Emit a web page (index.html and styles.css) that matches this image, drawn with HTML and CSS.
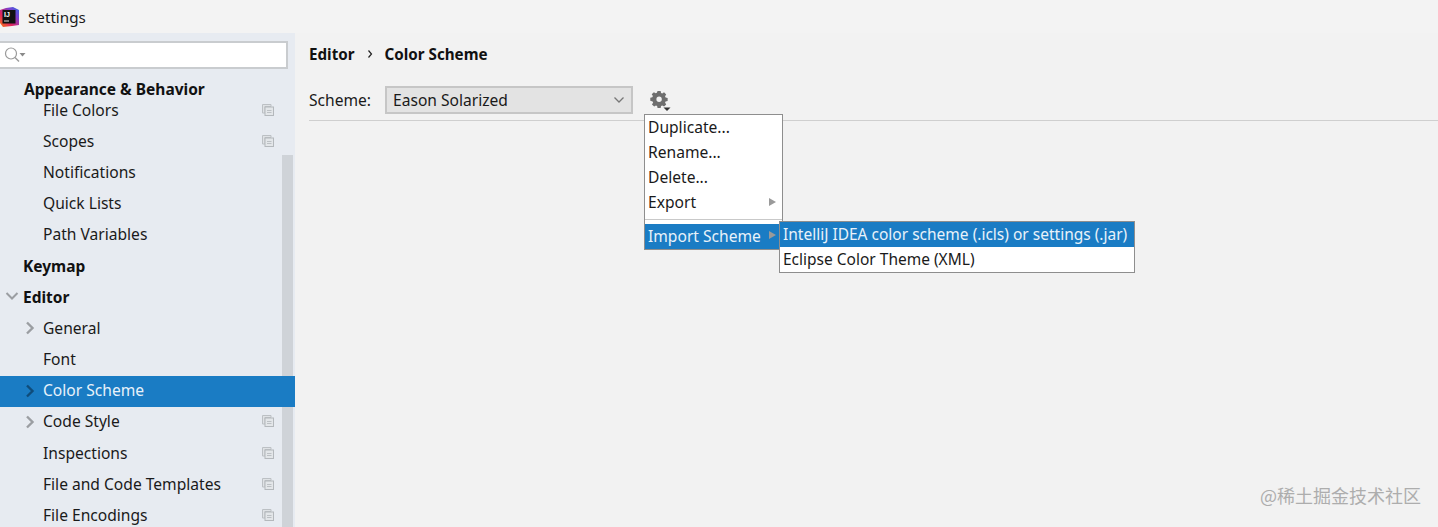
FILE: index.html
```html
<!DOCTYPE html>
<html lang="en">
<head>
<meta charset="utf-8">
<title>Settings</title>
<link rel="stylesheet" href="styles.css">
</head>
<body>
<svg class="defs" width="0" height="0" aria-hidden="true">
  <defs>
    <symbol id="copy" viewBox="0 0 12 12">
      <path d="M0.5 0.5h8.5v2H3v6.5H0.5z" fill="#dfe2e5" stroke="#bcc0c4"/>
      <rect x="3" y="3" width="8.5" height="8.5" fill="#e3e6e9" stroke="#b4b8bc"/>
      <path d="M5 6.5h4.5M5 8.5h4.5" stroke="#bcc0c4"/>
    </symbol>
    <symbol id="chev" viewBox="0 0 10 14">
      <path d="M2 1.5 7.5 7 2 12.5" fill="none" stroke="currentColor" stroke-width="2.4"/>
    </symbol>
  </defs>
</svg>
<div class="window">
  <header class="titlebar">
    <svg class="logo" viewBox="0 0 20 20" width="20" height="20">
      <defs>
        <linearGradient id="lg" x1="0" y1="1" x2="1" y2="0">
          <stop offset="0" stop-color="#f97a12"/>
          <stop offset=".35" stop-color="#e0245e"/>
          <stop offset=".7" stop-color="#7a3fd0"/>
          <stop offset="1" stop-color="#2f6ce0"/>
        </linearGradient>
      </defs>
      <path d="M0 3 6 1 13 0 19 3 19 18 12 19 3 20 0 16z" fill="url(#lg)"/>
      <rect x="2.500" y="3" width="13" height="13.500" fill="#111"/>
      <text x="4" y="10" class="logo-text">IJ</text>
      <rect x="4" y="13.500" width="5" height="1" fill="#ddd"/>
    </svg>
    <span class="title">Settings</span>
  </header>
  <div class="body">
    <aside class="sidebar">
      <div class="search">
        <svg class="search-icon" viewBox="0 0 22 18" width="22" height="18">
          <circle cx="7" cy="7.500" r="5.500" fill="none" stroke="#9a9a9a" stroke-width="1.200"/>
          <path d="M11 11.500 15 15.500" stroke="#9a9a9a" stroke-width="1.500"/>
          <path d="M15.500 7h6l-3 3.500z" fill="#8a8a8a"/>
        </svg>
      </div>
      <div class="tree-wrap">
        <div class="scrollbar"></div>
        <div class="sticky-row bold">Appearance &amp; Behavior</div>
        <ul class="tree">
          <li class="row"><span class="label">File Colors</span><svg class="copy"><use href="#copy"/></svg></li>
          <li class="row"><span class="label">Scopes</span><svg class="copy"><use href="#copy"/></svg></li>
          <li class="row"><span class="label">Notifications</span></li>
          <li class="row"><span class="label">Quick Lists</span></li>
          <li class="row"><span class="label">Path Variables</span></li>
          <li class="row top bold"><span class="label">Keymap</span></li>
          <li class="row top bold">
            <svg class="down" viewBox="0 0 14 10" width="14" height="10"><path d="M1.500 2 7 7.500 12.500 2" fill="none" stroke="#9b9ea2" stroke-width="2"/></svg>
            <span class="label">Editor</span>
          </li>
          <li class="row"><svg class="chev"><use href="#chev"/></svg><span class="label">General</span></li>
          <li class="row"><span class="label">Font</span></li>
          <li class="row selected"><svg class="chev"><use href="#chev"/></svg><span class="label">Color Scheme</span></li>
          <li class="row"><svg class="chev"><use href="#chev"/></svg><span class="label">Code Style</span><svg class="copy"><use href="#copy"/></svg></li>
          <li class="row"><span class="label">Inspections</span><svg class="copy"><use href="#copy"/></svg></li>
          <li class="row"><span class="label">File and Code Templates</span><svg class="copy"><use href="#copy"/></svg></li>
          <li class="row"><span class="label">File Encodings</span><svg class="copy"><use href="#copy"/></svg></li>
        </ul>
      </div>
    </aside>
    <main class="content">
      <nav class="crumbs">
        <span>Editor</span>
        <svg class="crumb-sep" viewBox="0 0 6 10" width="6" height="10"><path d="M1.500 1.500 4.500 5 1.500 8.500" fill="none" stroke="#222" stroke-width="1.200"/></svg>
        <span>Color Scheme</span>
      </nav>
      <div class="scheme">
        <label class="scheme-label">Scheme:</label>
        <div class="combo">
          <span>Eason Solarized</span>
          <svg viewBox="0 0 12 8" width="12" height="8"><path d="M1.500 1.500 6 6l4.500-4.500" fill="none" stroke="#777" stroke-width="1.300"/></svg>
        </div>
        <svg class="gear" viewBox="0 0 22 22" width="22" height="22">
          <path fill-rule="evenodd" fill="#6e6e6e" d="M7.300 1h3.400l.5 2.300 1.300.6 2-1.300 2.400 2.400-1.300 2 .6 1.300 2.300.5v3.400l-2.300.5-.6 1.300 1.300 2-2.400 2.400-2-1.300-1.300.6-.5 2.300H7.300l-.5-2.300-1.300-.6-2 1.300-2.400-2.400 1.300-2-.6-1.300L-.8 12V8.600l2.300-.5.6-1.300-1.300-2 2.400-2.400 2 1.300 1.300-.6zM9 7.300a3 3 0 1 0 0 6 3 3 0 0 0 0-6z" transform="translate(1 0) scale(.9)"/>
          <path d="M13.500 17.500h7l-3.500 3.500z" fill="#333"/>
        </svg>
      </div>
      <ul class="menu">
        <li class="item">Duplicate...</li>
        <li class="item">Rename...</li>
        <li class="item">Delete...</li>
        <li class="item has-sub">Export<i class="arrow"></i></li>
        <li class="sep"></li>
        <li class="item active has-sub">Import Scheme<i class="arrow"></i></li>
      </ul>
      <ul class="submenu">
        <li class="item active">IntelliJ IDEA color scheme (.icls) or settings (.jar)</li>
        <li class="item">Eclipse Color Theme (XML)</li>
      </ul>
      <div class="watermark">@稀土掘金技术社区</div>
    </main>
  </div>
</div>
</body>
</html>
```
FILE: styles.css
```css
* { box-sizing: border-box; }
html, body { margin: 0; height: 100%; overflow: hidden; }
body {
  font-family: "Noto Sans", "Noto Sans CJK SC", sans-serif;
  font-size: 15.6px;
  color: #1a1a1a;
  background: #f2f2f2;
}
ul { list-style: none; margin: 0; padding: 0; }
.defs { position: absolute; }
.window { width: 1438px; height: 527px; display: flex; flex-direction: column; }

.titlebar { height: 33px; display: flex; align-items: center; padding-top: 1px; background: #f3f3f3; flex: none; }
.logo { margin-right: 8px; flex: none; }
.logo-text { font: 700 7px "Liberation Sans", sans-serif; fill: #fff; }
.title { font-size: 15.2px; }

.body { flex: 1; display: flex; min-height: 0; }
.sidebar { width: 295px; flex: none; background: #e7ebf1; display: flex; flex-direction: column; overflow: hidden; padding-top: 8px; }
.search { width: 288px; height: 28px; flex: none; background: #fff; border: 2px solid #c9cccf; border-left: 0; display: flex; align-items: center; padding-left: 4px; }
.search-icon { flex: none; }

.tree-wrap { flex: 1; position: relative; padding-top: 10px; }
.scrollbar { position: absolute; top: 86px; bottom: 0; left: 282px; width: 11px; background: #cfd3d8; }
.sticky-row { position: relative; height: 21px; line-height: 21px; padding-left: 24px; margin-bottom: -5px; }
.bold { font-weight: 700; color: #111; font-size: 15.5px; }
.tree { position: relative; }
.row { position: relative; height: 31.2px; display: flex; align-items: center; padding: 0 21px 2px 43px; }
.row.top { padding-left: 23px; }
.label { flex: 1; white-space: nowrap; }
.copy { width: 12px; height: 12px; flex: none; }
.chev { position: absolute; left: 25px; top: 8px; width: 10px; height: 14px; color: #9b9ea2; }
.down { position: absolute; left: 5px; top: 9px; }
.selected { background: #1a7cc4; color: #e8f2fa; }
.selected .chev { color: #0f4c7a; }

.content { flex: 1; position: relative; padding: 0 0 0 14px; min-width: 0; }
.crumbs { height: 42px; display: flex; align-items: center; gap: 13px; font-weight: 700; font-size: 15.2px; color: #111; }
.crumb-sep { margin: 0 -1px 0 -1px; }
.scheme { display: flex; align-items: center; height: 46px; padding-top: 5px; border-bottom: 1px solid #cfcfcf; }
.scheme-label { width: 76px; flex: none; }
.combo { width: 248px; height: 28px; background: #e3e3e3; border: 2px solid #c6c6c6; display: flex; align-items: center; justify-content: space-between; padding: 0 6px 0 6px; }
.gear { margin: 2px 0 0 17px; flex: none; }

.menu, .submenu { position: absolute; background: #fff; border: 1px solid #8e8e8e; }
.menu { left: 349px; top: 81px; width: 139px; padding-top: 1px; height: 136px; }
.submenu { left: 484px; top: 188px; width: 356px; height: 52px; font-size: 15.5px; }
.item { height: 25px; line-height: 25px; padding-left: 3px; position: relative; white-space: nowrap; color: #1a1a1a; }
.menu .item { line-height: 23px; }
.menu .item.active { line-height: 25px; }
.sep { height: 1px; background: #c9c9c9; margin: 3px 0 4px; }
.item.active { background: #1a7cc4; color: #e8f2fa; }
.arrow { position: absolute; right: 6px; top: 7px; width: 0; height: 0; border-left: 7px solid #9a9a9a; border-top: 4.5px solid transparent; border-bottom: 4.5px solid transparent; }

.watermark { position: absolute; right: 17px; bottom: 19px; font-size: 18px; line-height: 26px; color: #adadad; font-family: "Noto Sans CJK SC", sans-serif; }
```
